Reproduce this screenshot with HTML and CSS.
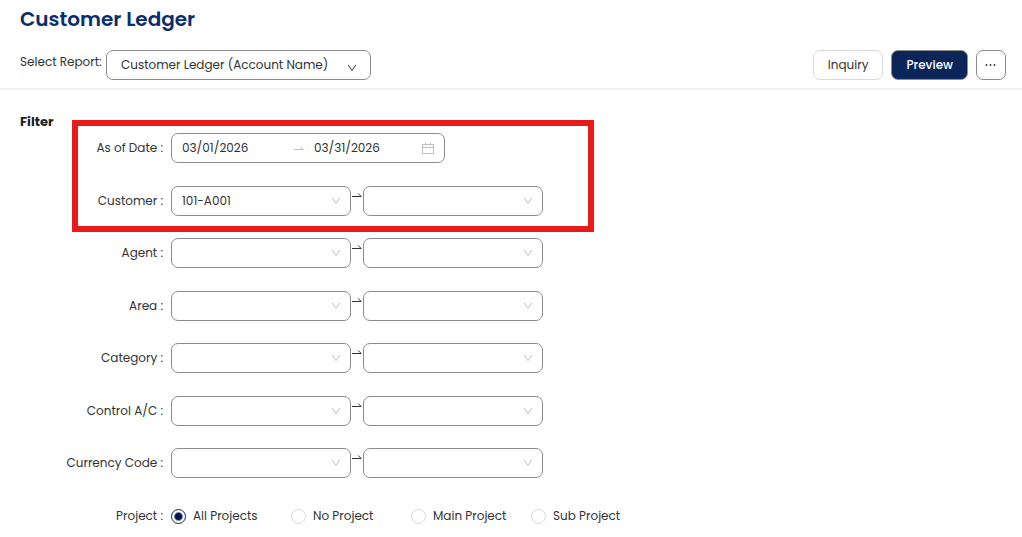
FILE: index.html
```
<!DOCTYPE html>
<html lang="en">
<head>
<meta charset="utf-8">
<meta name="viewport" content="width=device-width, initial-scale=1">
<title>Customer Ledger</title>
<link rel="stylesheet" href="styles.css">
</head>
<body>
<svg class="sprite" aria-hidden="true">
  <symbol id="chevron" viewBox="0 0 10 10"><path d="M1.2 2 5 7.500 8.800 2" fill="none" stroke="currentColor"/></symbol>
  <symbol id="arrow" viewBox="0 0 10 6"><path d="M0 4.500H9.200L6.300 1.500" fill="none" stroke="currentColor"/></symbol>
</svg>
<header class="header">
  <h1 class="title">Customer Ledger</h1>
  <div class="toolbar">
    <label class="report-label" for="report">Select Report:</label>
    <div class="select-box report-box">
      <select class="select" id="report"><option>Customer Ledger (Account Name)</option></select>
      <svg class="chevron"><use href="#chevron"/></svg>
    </div>
    <div class="actions">
      <button class="button" type="button">Inquiry</button>
      <button class="button primary" type="button">Preview</button>
      <button class="button more" type="button" aria-label="More">
        <svg width="12" height="4" viewBox="0 0 12 4" fill="currentColor"><circle cx="1.500" cy="2" r=".9"/><circle cx="5.500" cy="2" r=".9"/><circle cx="9.500" cy="2" r=".9"/></svg>
      </button>
    </div>
  </div>
</header>
<main class="filter">
  <h2 class="filter-title">Filter</h2>
  <form class="form">
    <div class="row">
      <label class="label" for="date-from">As of Date :</label>
      <div class="range">
        <input class="date" id="date-from" type="text" value="03/01/2026">
        <svg class="range-arrow"><use href="#arrow"/></svg>
        <input class="date" type="text" value="03/31/2026" aria-label="To date">
        <svg class="calendar" viewBox="0 0 12 12" fill="none" stroke="currentColor"><path d="M.5 2.500h11v9h-11zM.5 5.500h11M3.500.5v3M8.500.5v3"/></svg>
      </div>
    </div>
    <div class="row">
      <label class="label" for="customer">Customer :</label>
      <div class="select-box"><select class="select" id="customer"><option>101-A001</option></select><svg class="chevron"><use href="#chevron"/></svg></div>
      <svg class="to"><use href="#arrow"/></svg>
      <div class="select-box"><select class="select" aria-label="Customer to"><option></option></select><svg class="chevron"><use href="#chevron"/></svg></div>
    </div>
    <div class="row">
      <label class="label" for="agent">Agent :</label>
      <div class="select-box"><select class="select" id="agent"><option></option></select><svg class="chevron"><use href="#chevron"/></svg></div>
      <svg class="to"><use href="#arrow"/></svg>
      <div class="select-box"><select class="select" aria-label="Agent to"><option></option></select><svg class="chevron"><use href="#chevron"/></svg></div>
    </div>
    <div class="row">
      <label class="label" for="area">Area :</label>
      <div class="select-box"><select class="select" id="area"><option></option></select><svg class="chevron"><use href="#chevron"/></svg></div>
      <svg class="to"><use href="#arrow"/></svg>
      <div class="select-box"><select class="select" aria-label="Area to"><option></option></select><svg class="chevron"><use href="#chevron"/></svg></div>
    </div>
    <div class="row">
      <label class="label" for="category">Category :</label>
      <div class="select-box"><select class="select" id="category"><option></option></select><svg class="chevron"><use href="#chevron"/></svg></div>
      <svg class="to"><use href="#arrow"/></svg>
      <div class="select-box"><select class="select" aria-label="Category to"><option></option></select><svg class="chevron"><use href="#chevron"/></svg></div>
    </div>
    <div class="row">
      <label class="label" for="control">Control A/C :</label>
      <div class="select-box"><select class="select" id="control"><option></option></select><svg class="chevron"><use href="#chevron"/></svg></div>
      <svg class="to"><use href="#arrow"/></svg>
      <div class="select-box"><select class="select" aria-label="Control A/C to"><option></option></select><svg class="chevron"><use href="#chevron"/></svg></div>
    </div>
    <div class="row">
      <label class="label" for="currency">Currency Code :</label>
      <div class="select-box"><select class="select" id="currency"><option></option></select><svg class="chevron"><use href="#chevron"/></svg></div>
      <svg class="to"><use href="#arrow"/></svg>
      <div class="select-box"><select class="select" aria-label="Currency Code to"><option></option></select><svg class="chevron"><use href="#chevron"/></svg></div>
    </div>
    <div class="row" role="radiogroup" aria-labelledby="project">
      <span class="label" id="project">Project :</span>
      <div class="radios">
        <label class="radio"><input type="radio" name="project" checked>All Projects</label>
        <label class="radio"><input type="radio" name="project">No Project</label>
        <label class="radio"><input type="radio" name="project">Main Project</label>
        <label class="radio"><input type="radio" name="project">Sub Project</label>
      </div>
    </div>
    <div class="highlight"></div>
  </form>
</main>
</body>
</html>
```
FILE: styles.css
```
* { box-sizing: border-box; }
body {
  margin: 0;
  background: #fff;
  color: #333;
  font: 12px/20px Poppins, Inter, sans-serif;
}
input, select, button { font: inherit; color: inherit; }
.sprite { position: absolute; width: 0; height: 0; }

.header { padding: 4px 16px 8px 20px; border-bottom: 2px solid #f0f0f0; }
.title { margin: 0 0 16px; font-size: 20px; font-weight: 600; line-height: 30px; color: #0a2d6b; }
.toolbar { display: flex; align-items: center; }
.report-label { width: 86px; padding-bottom: 6px; white-space: nowrap; }
.report-box.select-box { flex-basis: 265px; }
.report-box .select { padding-left: 14px; }
.report-box .chevron { right: 14px; top: 13px; color: #333; }

.actions { display: flex; gap: 8px; margin-left: auto; }
.button {
  height: 30px;
  padding: 0 14px;
  border: 1px solid #d9d9d9;
  border-radius: 7px;
  background: #fff;
}
.primary { border-color: #8c8c8c; background: #0b2559; color: #fff; font-weight: 500; }
.more { display: flex; align-items: center; padding: 0 8px; border-color: #8c8c8c; }

.select-box { position: relative; flex: 0 1 180px; min-width: 0; }
.select {
  display: block;
  width: 100%;
  height: 30px;
  padding: 0 28px 0 10px;
  border: 1px solid #8c8c8c;
  border-radius: 7px;
  background: #fff;
  appearance: none;
}
.chevron {
  position: absolute;
  top: 10px;
  right: 10px;
  width: 10px;
  height: 10px;
  color: #bfbfbf;
  pointer-events: none;
}

.filter { padding: 22px 20px 0; }
.filter-title { margin: 0; font-size: 13px; font-weight: 700; line-height: 20px; color: #222; }
.form { position: relative; margin-top: 1px; }
.row { display: flex; align-items: center; height: 30px; margin-bottom: 23px; }
.row:nth-child(even) { margin-bottom: 22px; }
.row:nth-child(8) { margin-bottom: 0; }
.label { flex: none; width: 143px; margin-right: 8px; text-align: right; }
.to { align-self: flex-start; flex: none; width: 10px; height: 6px; margin: 6px 1px; }

.range {
  display: flex;
  align-items: center;
  flex: 0 1 274px;
  height: 30px;
  padding: 0 10px;
  border: 1px solid #8c8c8c;
  border-radius: 7px;
}
.date { flex: 1; width: 0; min-width: 0; padding: 0; border: 0; background: none; }
.range-arrow { flex: none; width: 10px; height: 6px; margin: 0 10px 0 4px; color: #bfbfbf; }
.calendar { flex: none; width: 12px; height: 12px; color: #bfbfbf; }

.radios { display: grid; grid-template-columns: repeat(4, 120px); }
.radio { display: flex; align-items: center; gap: 7px; white-space: nowrap; }
.radio input {
  flex: none;
  width: 15px;
  height: 15px;
  margin: 0;
  border: 1px solid #d9d9d9;
  border-radius: 50%;
  appearance: none;
}
.radio input:checked {
  border-color: #0b2559;
  background: radial-gradient(circle, #001650 3px, #fff 5px);
}

.highlight {
  position: absolute;
  top: -13px;
  left: 52px;
  width: 522px;
  height: 112px;
  border: 6px solid #e81b1b;
  pointer-events: none;
}
```
